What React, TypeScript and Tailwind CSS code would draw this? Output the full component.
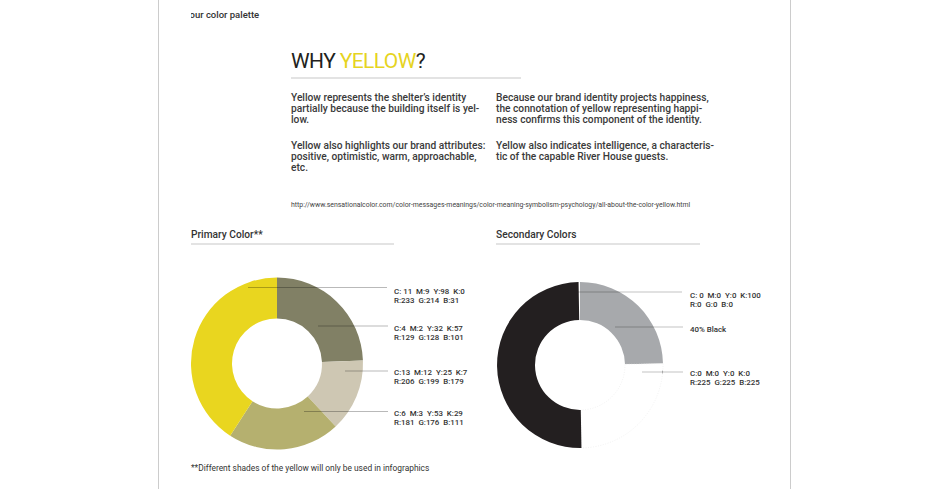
import React from "react";

const arc = (cx: number, cy: number, R: number, r: number, a0: number, a1: number) => {
  const p = (rad: number, a: number) => [
    cx + rad * Math.sin((a * Math.PI) / 180),
    cy - rad * Math.cos((a * Math.PI) / 180),
  ];
  const large = a1 - a0 > 180 ? 1 : 0;
  const [x0, y0] = p(R, a0);
  const [x1, y1] = p(R, a1);
  const [x2, y2] = p(r, a1);
  const [x3, y3] = p(r, a0);
  return `M${x0} ${y0} A${R} ${R} 0 ${large} 1 ${x1} ${y1} L${x2} ${y2} A${r} ${r} 0 ${large} 0 ${x3} ${y3} Z`;
};

function Label({ top, left, lines }: { top: number; left: number; lines: string[] }) {
  return (
    <div
      className="absolute text-[7.9px] leading-[9px] font-medium text-[#333] whitespace-pre"
      style={{ top, left }}
    >
      {lines.map((l, i) => (
        <div key={i}>{l}</div>
      ))}
    </div>
  );
}

function PrimaryChart() {
  const cx = 86, cy = 113.5, R = 86, r = 45;
  return (
    <div className="relative h-[205px] w-[300px]">
      <svg width="300" height="205" className="block">
        <path d={arc(cx, cy, R, r, 0, 88)} fill="#818065" />
        <path d={arc(cx, cy, R, r, 88, 137)} fill="#CEC7B3" />
        <path d={arc(cx, cy, R, r, 137, 213)} fill="#B5B06F" />
        <path d={arc(cx, cy, R, r, 213, 360)} fill="#E9D61F" />
        <g stroke="#000" strokeOpacity="0.35" strokeWidth="0.8">
          <line x1="57" y1="37.5" x2="196" y2="37.5" />
          <line x1="127" y1="76" x2="197" y2="76" />
          <line x1="154" y1="121" x2="197" y2="121" />
          <line x1="113" y1="161.5" x2="197" y2="161.5" />
        </g>
      </svg>
      <Label top={36.5} left={203} lines={["C: 11  M:9  Y:98  K:0", "R:233  G:214  B:31"]} />
      <Label top={74} left={203} lines={["C:4  M:2  Y:32  K:57", "R:129  G:128  B:101"]} />
      <Label top={118} left={203} lines={["C:13  M:12  Y:25  K:7", "R:206  G:199  B:179"]} />
      <Label top={158.5} left={203} lines={["C:6  M:3  Y:53  K:29", "R:181  G:176  B:111"]} />
    </div>
  );
}

function SecondaryChart() {
  const cx = 84, cy = 115, R = 83, r = 45;
  return (
    <div className="relative h-[205px] w-[290px]">
      <svg width="290" height="205" className="block">
        <path d={arc(cx, cy, R, r, 0, 89)} fill="#A7A9AC" />
        <path
          d={arc(cx, cy, R, r, 89, 179)}
          fill="#ffffff"
          stroke="#e2e2e2"
          strokeWidth="0.5"
          strokeDasharray="1 1.5"
        />
        <path d={arc(cx, cy, R, r, 179, 359)} fill="#231F20" />
        <g stroke="#000" strokeOpacity="0.3" strokeWidth="0.8">
          <line x1="82" y1="42" x2="186" y2="42" />
          <line x1="119" y1="77" x2="187" y2="77" />
          <line x1="146" y1="122" x2="187" y2="122" />
          <line x1="166.5" y1="120.5" x2="166.5" y2="123.5" />
        </g>
      </svg>
      <Label top={41} left={194} lines={["C: 0  M:0  Y:0  K:100", "R:0  G:0  B:0"]} />
      <Label top={74.5} left={194} lines={["40% Black"]} />
      <Label top={119} left={194} lines={["C:0  M:0  Y:0  K:0", "R:225  G:225  B:225"]} />
    </div>
  );
}

export default function App() {
  return (
    <div className="w-[950px] h-[489px] bg-white overflow-hidden font-[Roboto,sans-serif] text-[#2b2b2b]">
      <div className="ml-[158px] w-[633px] h-full border-x border-[#cccccc] pl-[32px] flex flex-col">
        <div className="pt-[9px] h-[21px] overflow-hidden">
          <div className="-ml-[1.5px] text-[9.5px] leading-[12px] font-medium text-[#333]">our color palette</div>
        </div>

        <div className="ml-[100px] w-[230px] mt-[30px]">
          <h1 className="text-[21px] leading-[21px] font-normal tracking-[-0.6px] text-[#231f20]">
            WHY <span className="text-[#e6d41f]">YELLOW</span>?
          </h1>
          <div className="mt-[5px] h-[2px] bg-[#e3e3e3]" />
        </div>

        <div className="ml-[100px] mt-[13px] grid grid-cols-[205px_1fr] text-[10.2px] leading-[11px] font-medium text-[#3a3a3a] whitespace-nowrap">
          <div>
            <p className="mb-[15px]">
              Yellow represents the shelter’s identity
              <br />
              partially because the building itself is yel-
              <br />
              low.
            </p>
            <p>
              Yellow also highlights our brand attributes:
              <br />
              positive, optimistic, warm, approachable,
              <br />
              etc.
            </p>
          </div>
          <div>
            <p className="mb-[15px]">
              Because our brand identity projects happiness,
              <br />
              the connotation of yellow representing happi-
              <br />
              ness confirms this component of the identity.
            </p>
            <p>
              Yellow also indicates intelligence, a characteris-
              <br />
              tic of the capable River House guests.
            </p>
          </div>
        </div>

        <div className="ml-[100px] mt-[28px] text-[6.9px] leading-[8px] text-[#444] whitespace-nowrap">
          http://www.sensationalcolor.com/color-messages-meanings/color-meaning-symbolism-psychology/all-about-the-color-yellow.html
        </div>

        <div className="mt-[20px] flex">
          <div className="w-[305px]">
            <div className="text-[10.2px] leading-[12px] font-medium text-[#333]">Primary Color**</div>
            <div className="mt-[2px] w-[203px] h-[2px] bg-[#e3e3e3]" />
            <div className="mt-[5px]">
              <PrimaryChart />
            </div>
          </div>
          <div className="flex-1">
            <div className="text-[10.2px] leading-[12px] font-medium text-[#333]">Secondary Colors</div>
            <div className="mt-[2px] w-[204px] h-[2px] bg-[#e3e3e3]" />
            <div className="mt-[5px]">
              <SecondaryChart />
            </div>
          </div>
        </div>

        <div className="mt-[9px] text-[8.4px] leading-[9px] text-[#333] whitespace-nowrap">
          **Different shades of the yellow will only be used in infographics
        </div>
      </div>
    </div>
  );
}
